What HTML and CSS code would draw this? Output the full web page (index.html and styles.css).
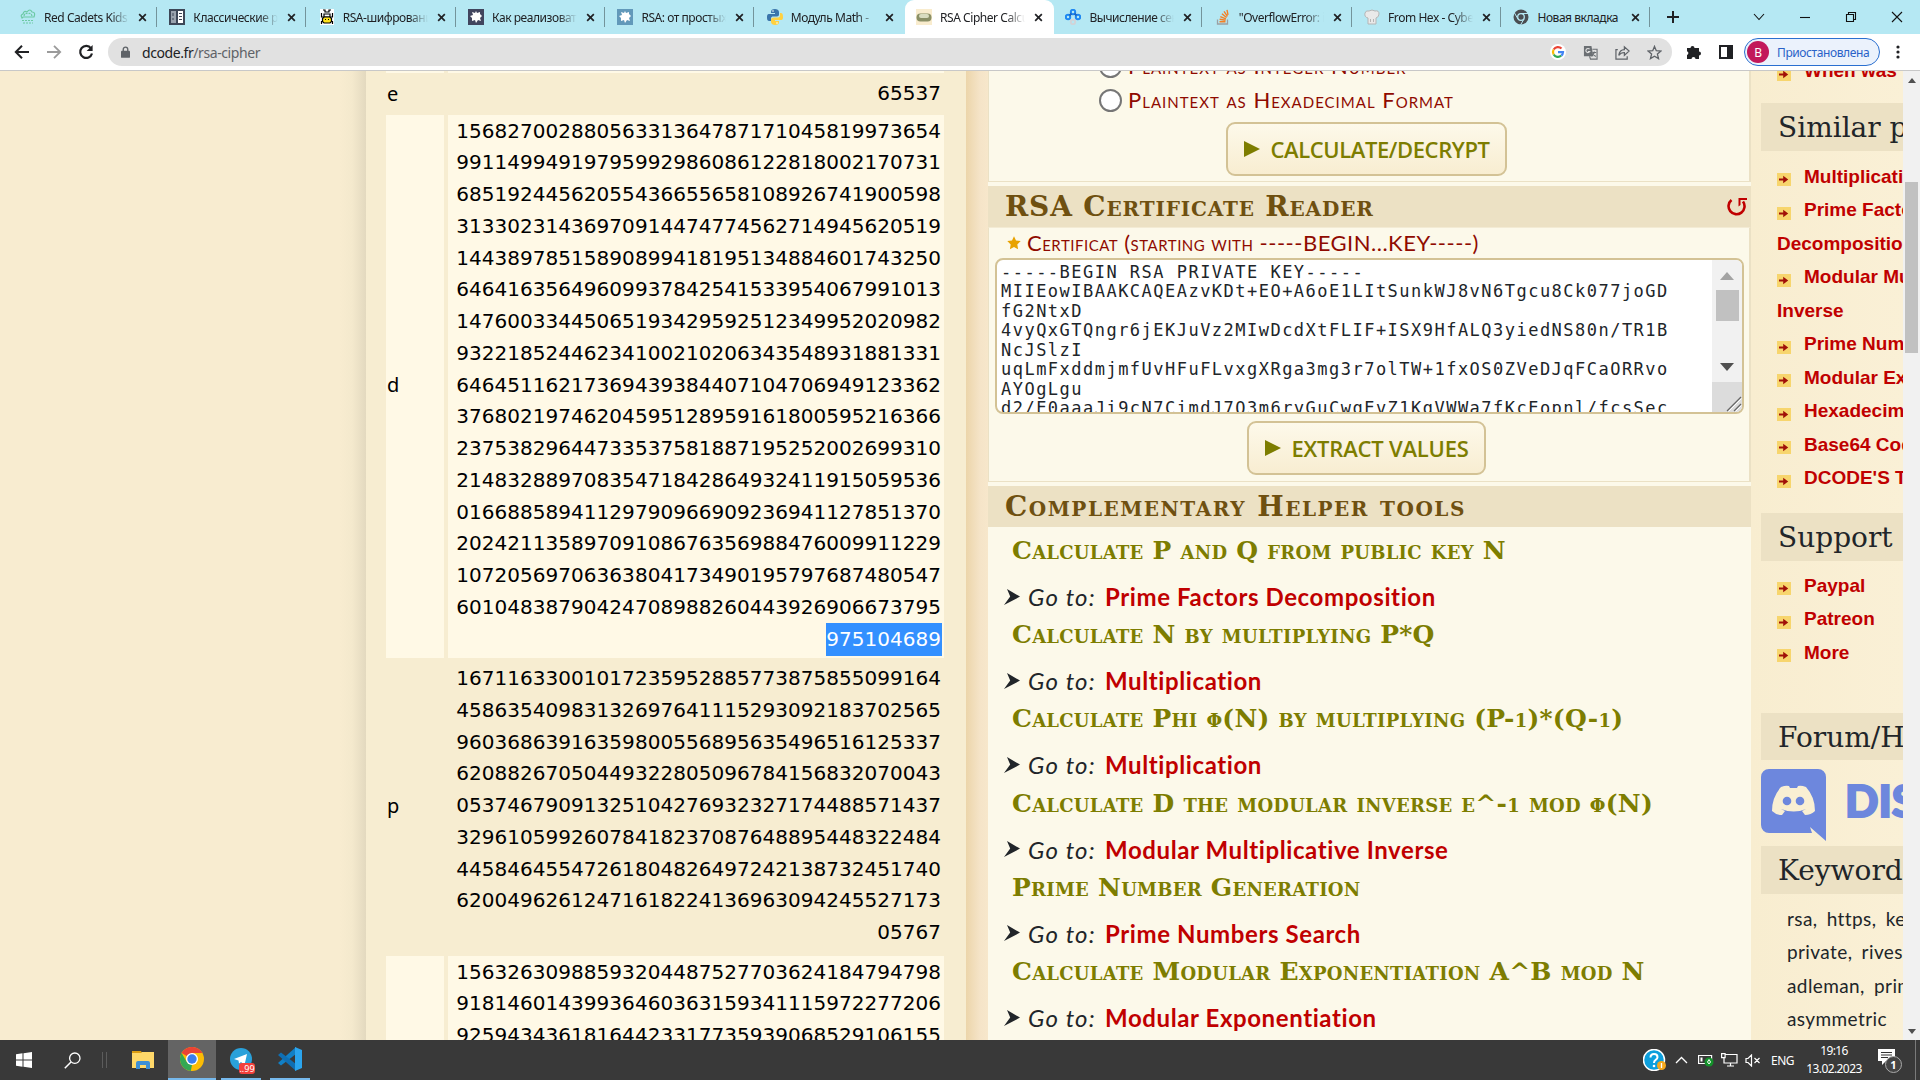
FILE: index.html
```html
<!DOCTYPE html>
<html lang="ru">
<head>
<meta charset="utf-8">
<title>RSA Cipher Calculator</title>
<link rel="stylesheet" href="styles.css">
</head>
<body>
<svg width="0" height="0" class="defs">
  <symbol id="x" viewBox="0 0 10 10"><path d="M1.3 1.3l7.4 7.4M8.7 1.3L1.3 8.7" stroke="#202124" stroke-width="1.9" fill="none"/></symbol>
  <symbol id="bullet" viewBox="0 0 14 13"><rect width="14" height="13" fill="#f7d56d"/><path d="M2 5.6h4.2V2.7l5 3.8-5 3.8V7.6H2z" fill="#a01008"/></symbol>
  <symbol id="go" viewBox="0 0 16 16"><path d="M3 0l13 7.6L0 16l6.2-8.4z" fill="#212529"/></symbol>
</svg>

<header class="tabs">
  <div class="tab"><svg class="fav" viewBox="0 0 16 16"><g fill="none" stroke="#6cc9a4" stroke-width="1.2"><path d="M2 9Q0 6 3 5 4 1 7 3 10-1 12 3q4 0 2 5H3z"/><path d="M4 7q1-4 4-2 3-2 4 2M2 11.5h12M3 14h10" stroke-dasharray="2 1"/></g></svg><span>Red Cadets Kids C</span><svg class="x"><use href="#x"/></svg></div>
  <div class="tab"><svg class="fav" viewBox="0 0 16 16"><path fill="#3d4757" d="M0 0h16v16H0z"/><path fill="#9aa3ae" d="M2 2h5v12H2z"/><path fill="#fff" d="M9 2h5v12H9z"/><path stroke="#3d4757" d="M4 4v3M4 9v2M10 4.5h3M10 7.500h3M10 10.5h3"/></svg><span>Классические ре</span><svg class="x"><use href="#x"/></svg></div>
  <div class="tab"><svg class="fav" viewBox="0 0 16 16"><path fill="#fff" d="M1 0h14v16H1z"/><path fill="none" stroke="#000" stroke-width="1.2" d="M4 1h2v2h4V1h2M2.500 4v4h2M13.500 4v4h-2M2.500 15v-3M13.500 15v-3"/><path fill="none" stroke="#000" stroke-width="1.2" d="M5 5h6v3H5z"/><path fill="#ffe21a" stroke="#000" stroke-width="1.2" d="M5 8h6l1.500 1.500v3L11 14H5l-1.500-1.500v-3z"/><path fill="#000" d="M6 10h1v1H6zM9 10h1v1H9z"/></svg><span>RSA-шифрование</span><svg class="x"><use href="#x"/></svg></div>
  <div class="tab"><svg class="fav" viewBox="0 0 16 16"><path fill="#41455e" d="M0 0h16v16H0z"/><path fill="#fff" d="M8 2l1 2 3-1 0 2 2 2-2 2 1 3-3-1-2 3-1-3-3 1 0-3-2-2 3-1-1-3 3 1z"/></svg><span>Как реализовать</span><svg class="x"><use href="#x"/></svg></div>
  <div class="tab"><svg class="fav" viewBox="0 0 16 16"><path fill="#6299ba" d="M0 0h16v16H0z"/><path fill="#fff" d="M8 2l1 2 3-1 0 2 2 2-2 2 1 3-3-1-2 3-1-3-3 1 0-3-2-2 3-1-1-3 3 1z"/></svg><span>RSA: от простых ч</span><svg class="x"><use href="#x"/></svg></div>
  <div class="tab last"><svg class="fav" viewBox="0 0 16 16"><path fill="#3a75ab" d="M8 0C5 0 4 1 4 3v1h4v1H2C0 5 0 7 0 8s0 4 2 4h2V9.500C4 8 5 7.500 6 7.500h4c1 0 2-1 2-2V3c0-2-2-3-4-3z"/><path fill="#ffd140" d="M8 16c3 0 4-1 4-3v-1H8v-1h6c2 0 2-2 2-3s0-4-2-4h-1v2.500C13 8 12 8.500 10.500 8.500H7c-2 0-3 1-3 2V13c0 2 2 3 4 3z"/><circle cx="6" cy="2" r=".8" fill="#fff"/><circle cx="10" cy="14" r=".8" fill="#fff"/></svg><span>Модуль Math - </span><svg class="x"><use href="#x"/></svg></div>
  <div class="tab active"><svg class="fav" viewBox="0 0 16 16"><path fill="#f9ecce" d="M0 0h16v16H0z"/><rect x=".5" y="4.500" width="15" height="8" rx="4" fill="#8a8f66"/><rect x="3" y="5" width="10" height="4" rx="2" fill="#d9dcc0"/></svg><span>RSA Cipher Calcu</span><svg class="x"><use href="#x"/></svg></div>
  <div class="tab"><svg class="fav" viewBox="0 0 16 16"><g fill="none" stroke-width="2"><g stroke="#1e88f2"><circle cx="3" cy="8" r="2.200"/><circle cx="8" cy="3" r="2.200"/><circle cx="13" cy="8" r="2.200"/></g><circle cx="8" cy="13" r="2.200" stroke="#d0d4d8"/><path d="M4.500 6.500l2-2M9.500 4.500l2 2" stroke="#1e66c2"/></g></svg><span>Вычисление сек</span><svg class="x"><use href="#x"/></svg></div>
  <div class="tab"><svg class="fav" viewBox="0 0 16 16"><path fill="none" stroke="#9aa0a4" stroke-width="1.300" d="M2.500 10.500V15h10v-4.500"/><path stroke="#f48024" stroke-width="1.400" d="M4.500 12.700h6M4.600 10.200l6 1M5.300 7.600l5.600 2.300M6.900 4.800l4.700 3.700M9 2.300l3.500 5M12 .8l1 5"/></svg><span>"OverflowError: in</span><svg class="x"><use href="#x"/></svg></div>
  <div class="tab"><svg class="fav" viewBox="0 0 16 16"><path fill="#e9e9e9" stroke="#b5b5b5" d="M4 15V9Q0 8 1 4q1-3 4-2 3-2 6 0 4-1 4 3 0 3-3 4v6z"/><path stroke="#b5b5b5" d="M6.500 10v3M9.500 10v3"/></svg><span>From Hex - Cyber</span><svg class="x"><use href="#x"/></svg></div>
  <div class="tab"><svg class="fav" viewBox="0 0 16 16"><circle cx="8" cy="8" r="7.500" fill="#4a4d51"/><circle cx="8" cy="8" r="3.300" fill="#4a4d51" stroke="#b5e8f3" stroke-width="1.300"/><path d="M8 4.500h7M5 10L1.500 4M11 10l-3.500 6" stroke="#b5e8f3" stroke-width="1"/></svg><span class="full">Новая вкладка</span><svg class="x"><use href="#x"/></svg></div>
  <svg class="plus" viewBox="0 0 14 14"><path d="M7 1v12M1 7h12" stroke="#202124" stroke-width="2"/></svg>
  <div class="winctl">
    <svg viewBox="0 0 12 12"><path d="M1 3l5 5.500L11 3" /></svg>
    <svg viewBox="0 0 12 12"><path d="M1 6.500h10"/></svg>
    <svg viewBox="0 0 12 12"><path d="M1.500 3.500h7v7h-7zM3.500 3.500v-2h7v7h-2"/></svg>
    <svg viewBox="0 0 12 12"><path d="M1 1l10 10M11 1L1 11"/></svg>
  </div>
</header>

<nav class="toolbar">
  <svg class="nav" viewBox="0 0 16 16"><path d="M15 8H2M8 1.800L1.800 8 8 14.200" stroke="#202124" stroke-width="2" fill="none"/></svg>
  <svg class="nav" viewBox="0 0 16 16"><path d="M1 8h13M8 1.800L14.200 8 8 14.200" stroke="#9b9b9b" stroke-width="1.800" fill="none"/></svg>
  <svg class="nav" viewBox="0 0 16 16"><path d="M13 4.300A6 6 0 1 0 14 9.500" stroke="#202124" stroke-width="2.200" fill="none"/><path d="M14.600 1v6H8.600z" fill="#202124"/></svg>
  <div class="omni">
    <svg class="lock" viewBox="0 0 10 13"><path fill="#5f6368" d="M1 5h8a1 1 0 0 1 1 1v6a1 1 0 0 1-1 1H1a1 1 0 0 1-1-1V6a1 1 0 0 1 1-1z"/><path fill="none" stroke="#5f6368" stroke-width="1.500" d="M2.500 6V3.500a2.500 2.500 0 0 1 5 0V6"/></svg>
    <span class="url">dcode.fr<i>/rsa-cipher</i></span>
    <span class="goog"><svg viewBox="0 0 16 16" width="16" height="16"><circle cx="8" cy="8" r="8" fill="#fff"/><g fill="none" stroke-width="2.200"><path stroke="#ea4335" d="M3.700 5.500A5 5 0 0 1 11.500 4.500"/><path stroke="#fbbc05" d="M3.600 5.600a5 5 0 0 0 0 4.800"/><path stroke="#34a853" d="M3.700 10.500a5 5 0 0 0 7.500 1.200"/><path stroke="#4285f4" d="M8 8.200h5a5 5 0 0 1-1.700 3.500"/></g></svg></span>
    <svg class="oi" viewBox="0 0 16 16"><path fill="#6b6f73" d="M1 1h8l2 11H1z"/><path fill="none" stroke="#6b6f73" stroke-width="1.200" d="M10 4.500h5V15H8l-1-3M10 8h4M12 7v1q-.5 3-3 4M10.500 9l3 3.500"/><path fill="none" stroke="#e1e1e1" stroke-width="1.200" d="M7 4.500A2.200 2.200 0 1 0 7.200 7H5.200"/></svg>
    <svg class="oi" viewBox="0 0 16 16"><path fill="none" stroke="#5f6368" stroke-width="1.300" d="M3 5H1v10h12v-3M4 11q1-6 6-6V2l5 4.500-5 4.500V8Q6 8 4 11z"/></svg>
    <svg class="oi" viewBox="0 0 16 16"><path fill="none" stroke="#5f6368" stroke-width="1.400" d="M8 1.500l1.900 4.600 5 .4-3.800 3.200 1.200 4.800L8 11.900l-4.300 2.600 1.200-4.800L1.100 6.500l5-.4z"/></svg>
  </div>
  <svg class="ext" viewBox="0 0 16 16"><path fill="#202124" d="M1 4h3.500a2 2 0 1 1 4 0H13v3.500a2 2 0 1 1 0 4V15H9.500a2 2 0 0 0-4 0H1v-4a2 2 0 0 0 0-3.800z"/></svg>
  <svg class="side-ic" viewBox="0 0 14 14"><path fill="none" stroke="#202124" stroke-width="2" d="M1 1h12v12H1z"/><path fill="#202124" d="M8 1h5v12H8z"/></svg>
  <div class="profile"><b>В</b><span>Приостановлена</span></div>
  <svg class="dots" viewBox="0 0 4 16"><circle cx="2" cy="3" r="1.600"/><circle cx="2" cy="8" r="1.600"/><circle cx="2" cy="13" r="1.600"/></svg>
</nav>

<main class="page">
  <div class="margin-left"></div>
  <section class="results">
    <div class="row light stub"><div></div><div></div></div>
    <div class="row e"><div>e</div><div>65537</div></div>
    <div class="row light"><div>d</div><div>15682700288056331364787171045819973654<br>99114994919795992986086122818002170731<br>68519244562055436655658108926741900598<br>31330231436970914474774562714945620519<br>14438978515890899418195134884601743250<br>64641635649609937842541533954067991013<br>14760033445065193429592512349952020982<br>93221852446234100210206343548931881331<br>64645116217369439384407104706949123362<br>37680219746204595128959161800595216366<br>23753829644733537581887195252002699310<br>21483288970835471842864932411915059536<br>01668858941129790966909236941127851370<br>20242113589709108676356988476009911229<br>10720569706363804173490195797687480547<br>60104838790424708988260443926906673795<br><mark>975104689</mark></div></div>
    <div class="row"><div>p</div><div>16711633001017235952885773875855099164<br>45863540983132697641115293092183702565<br>96036863916359800556895635496516125337<br>62088267050449322805096784156832070043<br>05374679091325104276932327174488571437<br>32961059926078418237087648895448322484<br>44584645547261804826497242138732451740<br>62004962612471618224136963094245527173<br>05767</div></div>
    <div class="row light"><div></div><div>15632630988593204487527703624184794798<br>91814601439936460363159341115972277206<br>92594343618164423317735939068529106155<br>&nbsp;</div></div>
  </section>
  <div class="gutter"></div>
  <section class="tools">
    <div class="box first">
      <label class="opt cut"><i></i><span>Plaintext as Integer Number</span></label>
      <label class="opt"><i></i><span>Plaintext as Hexadecimal Format</span></label>
      <button class="btn b1"><svg viewBox="0 0 16 16"><path d="M0 0l16 8-16 8z"/></svg><span>CALCULATE/DECRYPT</span></button>
    </div>
    <h2><span class="t1">RSA Certificate Reader</span><svg class="reset" viewBox="0 0 21 19"><path d="M4.500 3A8 8 0 1 0 16 4.500" fill="none" stroke="#c00000" stroke-width="2.600"/><path d="M20 1H11.500v8.500l2-1.500V3H20z" fill="#c00000"/></svg></h2>
    <div class="box second">
      <div class="cert"><svg viewBox="0 0 14 14"><path fill="#e8a200" d="M7 .3l2 4.200 4.700.6-3.400 3.300.8 4.900L7 11l-4.100 2.300.8-4.900L.3 5.100 5 4.500z"/></svg><span>Certificat (starting with -----BEGIN...KEY-----)</span></div>
      <div class="area">
        <pre>-----BEGIN RSA PRIVATE KEY-----
MIIEowIBAAKCAQEAzvKDt+EO+A6oE1LItSunkWJ8vN6Tgcu8Ck077joGD
fG2NtxD
4vyQxGTQngr6jEKJuVz2MIwDcdXtFLIF+ISX9HfALQ3yiedNS80n/TR1B
NcJSlzI
uqLmFxddmjmfUvHFuFLvxgXRga3mg3r7olTW+1fxOS0ZVeDJqFCaORRvo
AYOgLgu
d2/E0aaaJi9cN7CimdJ7O3m6ryGuCwqEvZ1KgVWWa7fKcEopnl/fcsSec</pre>
        <div class="abar"><svg class="up" viewBox="0 0 14 8"><path fill="#a3a3a3" d="M7 0l7 8H0z"/></svg><div class="athumb"></div><svg class="down" viewBox="0 0 14 8"><path fill="#505050" d="M7 8l7-8H0z"/></svg><div class="grip"><svg viewBox="0 0 16 16"><path d="M1 15L15 1M8 15l7-7" stroke="#666" stroke-width="1.200"/><path d="M2.500 15.500L15.500 2.500M9.500 15.500l6-6" stroke="#fff" stroke-width="1"/></svg></div></div>
      </div>
      <button class="btn b2"><svg viewBox="0 0 16 16"><path d="M0 0l16 8-16 8z"/></svg><span>EXTRACT VALUES</span></button>
    </div>
    <h2><span class="t2">Complementary Helper tools</span></h2>
    <div class="helpers">
      <h3>Calculate P and Q from public key N</h3>
      <p><svg><use href="#go"/></svg><em>Go to:</em><a>Prime Factors Decomposition</a></p>
      <h3>Calculate N by multiplying P*Q</h3>
      <p><svg><use href="#go"/></svg><em>Go to:</em><a>Multiplication</a></p>
      <h3>Calculate Phi φ(N) by multiplying (P-<small>1</small>)*(Q-<small>1</small>)</h3>
      <p><svg><use href="#go"/></svg><em>Go to:</em><a>Multiplication</a></p>
      <h3>Calculate D the modular inverse e^-<small>1</small> mod φ(N)</h3>
      <p><svg><use href="#go"/></svg><em>Go to:</em><a>Modular Multiplicative Inverse</a></p>
      <h3>Prime Number Generation</h3>
      <p><svg><use href="#go"/></svg><em>Go to:</em><a>Prime Numbers Search</a></p>
      <h3>Calculate Modular Exponentiation A^B mod N</h3>
      <p><svg><use href="#go"/></svg><em>Go to:</em><a>Modular Exponentiation</a></p>
    </div>
  </section>
  <aside class="sidebar">
    <ul class="when"><li><svg><use href="#bullet"/></svg><a>When was</a></li></ul>
    <h4 class="sim">Similar pages</h4>
    <ul class="pages">
      <li><svg><use href="#bullet"/></svg><a>Multiplication</a></li>
      <li><svg><use href="#bullet"/></svg><a>Prime Factors</a></li>
      <li><a>Decomposition</a></li>
      <li><svg><use href="#bullet"/></svg><a>Modular Multiplicative</a></li>
      <li><a>Inverse</a></li>
      <li><svg><use href="#bullet"/></svg><a>Prime Numbers</a></li>
      <li><svg><use href="#bullet"/></svg><a>Modular Exponentiation</a></li>
      <li><svg><use href="#bullet"/></svg><a>Hexadecimal</a></li>
      <li><svg><use href="#bullet"/></svg><a>Base64 Coding</a></li>
      <li><svg><use href="#bullet"/></svg><a>DCODE'S TOOLS</a></li>
    </ul>
    <h4>Support</h4>
    <ul class="support">
      <li><svg><use href="#bullet"/></svg><a>Paypal</a></li>
      <li><svg><use href="#bullet"/></svg><a>Patreon</a></li>
      <li><svg><use href="#bullet"/></svg><a>More</a></li>
    </ul>
    <h4>Forum/Help</h4>
    <div class="discord">
      <svg viewBox="0 0 65 72" width="65" height="72"><path fill="#6d87dd" d="M8 0h49a8 8 0 0 1 8 8v64L49 58l2 6H8a8 8 0 0 1-8-8V8a8 8 0 0 1 8-8z"/><path fill="#f9efd3" d="M20 18q5-2 8-1l1 2h7l1-2q3-1 8 1 9 10 9 24-4 4-10 4l-3-4 4-2q-12 5-25 0l4 2-3 4q-6 0-10-4 0-14 9-24z"/><circle cx="26" cy="32" r="4.300" fill="#6d87dd"/><circle cx="39" cy="32" r="4.300" fill="#6d87dd"/></svg>
      <b>DISCORD</b>
    </div>
    <h4>Keywords</h4>
    <p class="keys">rsa, https, key,<br>private, rivest,<br>adleman, prime,<br>asymmetric</p>
  </aside>
  <div class="scroll"><svg viewBox="0 0 8 5"><path d="M4 0l4 5H0z" fill="#505050"/></svg><div class="thumb"></div><svg viewBox="0 0 8 5"><path d="M4 5l4-5H0z" fill="#505050"/></svg></div>
</main>

<footer class="taskbar">
  <div class="ti start"><svg viewBox="0 0 16 16" width="16" height="16"><path fill="#fff" d="M0 2.200l6.500-.9v6.200H0zM7.500 1.200L16 0v7.500H7.500zM0 8.500h6.500v6.200L0 13.800zM7.500 8.500H16V16l-8.500-1.200z"/></svg></div>
  <div class="ti search"><svg viewBox="0 0 17 17" width="17" height="17"><circle cx="10.800" cy="6.200" r="5.200" fill="none" stroke="#fff" stroke-width="1.300"/><path d="M7 10L.8 16.200" stroke="#fff" stroke-width="1.500"/></svg></div>
  <div class="sep"></div>
  <div class="ti expl"><svg viewBox="0 0 22 18" width="22" height="18"><path fill="#dc9d12" d="M0 0h9l1 2H0z"/><path fill="#ffd869" d="M0 2h9l1-1h12v16H0z"/><path fill="#3c8fd6" d="M4 18v-6q0-2 2-2h10q2 0 2 2v6h-4v-4H8v4z"/></svg></div>
  <div class="ti chrome on"><svg viewBox="0 0 24 24" width="24" height="24"><circle cx="12" cy="12" r="12" fill="#fbbc05"/><path fill="#ea4335" d="M12 12L1.600 6A12 12 0 0 1 22.400 6H12z"/><path fill="#34a853" d="M1.600 6l5.200 9L12 18l-1.200 6A12 12 0 0 1 1.600 6z"/><circle cx="12" cy="12" r="6" fill="#fff"/><circle cx="12" cy="12" r="4.700" fill="#3b7ded"/></svg></div>
  <div class="ti tg run"><svg viewBox="0 0 22 22" width="22" height="22"><circle cx="11" cy="11" r="11" fill="#2aa1da"/><path fill="#fff" d="M4 11l13-5-2.500 11-3.500-3-2 1.500-.5-3z"/></svg><span>..99</span></div>
  <div class="ti vs run"><svg viewBox="0 0 24 24" width="24" height="24"><path fill="#1180c6" d="M18 0v7L3 18.500 0 16 18 0z"/><path fill="#0f6fb4" d="M18 24v-7L3 5.500 0 8z"/><path fill="#2ba5ee" d="M17 0l7 3v18l-7 3z"/></svg></div>
  <div class="tray">
    <svg class="help" viewBox="0 0 23 22" width="23" height="22"><circle cx="11" cy="11" r="10.500" fill="#0d9fdc" stroke="#fff" stroke-width="1.500"/><path d="M7.500 8.500Q7.500 5 11 5t3.500 3.200Q14.500 10 12.500 11 11 12 11 14" fill="none" stroke="#fff" stroke-width="2"/><circle cx="11" cy="17" r="1.300" fill="#fff"/><circle cx="18.500" cy="16.500" r="4.500" fill="#f5a81c"/><path d="M18.500 14v5" stroke="#fff" stroke-width="1.300"/></svg>
    <svg class="chev" viewBox="0 0 13 8" width="13" height="8"><path d="M1 7l5.500-5.500L12 7" fill="none" stroke="#fff" stroke-width="1.300"/></svg>
    <svg class="bat" viewBox="0 0 16 14" width="16" height="14"><path d="M.6 2.500h13v8H.6z" fill="none" stroke="#fff" stroke-width="1.200"/><path d="M2.500 4.500h2v4h-2z" fill="#fff"/><circle cx="11" cy="9" r="4.500" fill="#13922a"/><path d="M11 6.500l1.500 2.500-1.500 2-1.500-2z" fill="none" stroke="#fff"/></svg>
    <svg class="net" viewBox="0 0 17 14" width="17" height="14"><path d="M4 1.500h12v8.500H3V5M9.500 10v3M6 13h7M.6.600h3.500v4H.6z" fill="none" stroke="#fff" stroke-width="1.200"/></svg>
    <svg class="snd" viewBox="0 0 16 13" width="16" height="13"><path d="M1 4.500h2L6.500 1v11L3 8.500H1zM9.500 4l5 5M14.500 4l-5 5" fill="none" stroke="#fff" stroke-width="1.200"/></svg>
    <span class="lang">ENG</span>
    <div class="clock"><span>19:16</span><span>13.02.2023</span></div>
    <div class="notif"><svg viewBox="0 0 17 16" width="17" height="16"><path fill="#fff" d="M0 0h17v12H8l-4 4v-4H0z"/><path d="M3 3.500h11M3 6h11M3 8.500h7" stroke="#333" stroke-width="1"/></svg><b>1</b></div>
    <div class="desk"></div>
  </div>
</footer>
</body>
</html>
```
FILE: styles.css
```css
* { box-sizing: border-box; }
body { margin: 0; width: 1920px; height: 1080px; overflow: hidden; display: flex; flex-direction: column; font-family: "Noto Sans", sans-serif; color: #212529; }
h2, h3, h4, p, ul, pre { margin: 0; padding: 0; }
ul { list-style: none; }
svg { display: block; flex: none; }
.defs { position: absolute; }

/* tab strip */
.tabs { flex: none; height: 34px; background: #b5e8f3; display: flex; align-items: center; padding-left: 9px; }
.tab { width: 149.350px; height: 34px; display: flex; align-items: center; padding-left: 11px; flex: none; }
.tab::after { content: ""; width: 1px; height: 20px; background: #73949b; margin-left: 9px; }
.tab.last::after, .tab.active::after { background: none; }
.tab.active { background: #fff; border-radius: 9px 9px 0 0; }
.fav { width: 16px; height: 16px; margin-right: 8px; }
.tab span { width: 85px; white-space: nowrap; overflow: hidden; font-size: 12px; letter-spacing: -.45px; color: #202124; -webkit-mask-image: linear-gradient(90deg, #000 78%, transparent); mask-image: linear-gradient(90deg, #000 78%, transparent); }
.tab span.full { -webkit-mask-image: none; mask-image: none; }
.tab .x { width: 9px; height: 9px; margin-left: 9px; }
.plus { width: 14px; height: 14px; margin-left: 14px; }
.winctl { display: flex; margin-left: auto; padding-right: 17px; gap: 34px; }
.winctl svg { width: 12px; height: 12px; fill: none; stroke: #111; stroke-width: 1.100; }

/* toolbar */
.toolbar { flex: none; height: 37px; border-bottom: 1px solid #c8c8c8; background: #fff; display: flex; align-items: center; padding-left: 14px; }
.nav { width: 16px; height: 16px; margin-right: 16px; }
.omni { width: 1564px; height: 28px; border-radius: 14px; background: #e1e1e1; display: flex; align-items: center; margin-left: -2px; padding: 0 10px 0 13px; }
.lock { width: 9px; height: 12px; margin-right: 12px; }
.url { font-size: 14px; letter-spacing: -.42px; color: #202124; margin-right: auto; }
.url i { font-style: normal; color: #5f6368; }
.oi { width: 15px; height: 15px; margin-left: 17px; }
.ext { width: 16px; height: 16px; margin-left: 14px; }
.side-ic { width: 14px; height: 14px; margin-left: 17px; }
.profile { width: 136px; height: 28px; border: 1.500px solid #2a6fd0; border-radius: 14px; background: #ebf2fc; margin-left: 11px; display: flex; align-items: center; padding-left: 2px; color: #2a62c8; font-size: 12px; letter-spacing: -.4px; }
.profile b { width: 22px; height: 22px; border-radius: 50%; background: #c2185b; color: #fff; font-weight: 400; display: flex; align-items: center; justify-content: center; margin-right: 8px; }
.dots { width: 4px; height: 16px; margin-left: 16px; fill: #202124; }

/* page */
.page { flex: none; height: 969px; display: flex; overflow: hidden; background: #f8eed2; }
.margin-left { width: 366px; background: linear-gradient(90deg, #f8ecd0 340px, #f4e9cd 352px, #e3d9bf 366px); }
.results { width: 600px; padding: 0 20px; background: #f7edd1; font: 20px/31.750px "DejaVu Sans", sans-serif; color: #000; }
.row { display: grid; grid-template-columns: 58px 496px; column-gap: 4px; margin-bottom: 3.800px; }
.row > div { padding: 1px 3px 3px 1px; }
.row > div:first-child { display: flex; align-items: center; font-family: "Noto Sans", sans-serif; padding-bottom: 4px; }
.row > div:last-child { text-align: right; white-space: nowrap; letter-spacing: .03px; }
.row.light > div { background: #fff9e6; }
.row.stub { height: 2px; }
.row.stub > div { padding: 0; }
.row.e { height: 34px; }
mark { background: #3390ff; color: #fff; padding: 4px 1px 5px 0; margin-right: -1px; }
.gutter { width: 22px; background: linear-gradient(90deg, #ecd5aa, #f5e4c8 14px, #f7e7cb); }

.tools { width: 763px; background: #fcf9ea; }
.box { width: 763px; border: 1px solid #ebe1c5; border-right-width: 2px; border-top: 0; display: flex; flex-direction: column; }
.box.first { height: 111px; margin-bottom: 4px; }
.opt { margin-left: 110px; height: 34px; display: flex; align-items: center; flex: none; font: 22px/34px Lato, sans-serif; font-variant: small-caps; letter-spacing: 1px; color: #8f0a00; white-space: nowrap; }
.opt.cut { margin-top: -22px; }
.opt i { width: 23px; height: 23px; border: 2px solid #767676; border-radius: 50%; background: #fff; margin-right: 6px; }
.btn { border: 2px solid #d3c295; border-radius: 9px; background: linear-gradient(#fdf9ea, #f8edd1); display: flex; align-items: center; align-self: center; padding: 0 0 0 16px; font: 600 22px/30px "Open Sans", sans-serif; color: #7d7d00; white-space: nowrap; }
.btn svg { width: 16px; height: 16px; fill: #7d7d00; margin-right: 11px; }
.b1 { width: 281px; height: 54px; margin: 5px 6px 0 0; letter-spacing: -.4px; }
.b2 { width: 239px; height: 54px; margin: 7px 6px 0 0; letter-spacing: -.2px; }
h2 { height: 41px; background: #ece1c4; display: flex; align-items: center; padding: 0 3px 0 17px; font: bold 28px/41px "DejaVu Serif", serif; font-variant: small-caps; color: #6f5010; white-space: nowrap; }
.t1 { letter-spacing: .85px; }
.t2 { letter-spacing: 1.500px; }
.reset { width: 21px; height: 19px; margin-left: auto; }
.box.second { height: 255px; margin-bottom: 4px; border-top: 1px solid #f3ebd4; }
.cert { height: 30px; display: flex; align-items: center; padding: 0 0 1px 18px; font: 22px/29px Lato, sans-serif; font-variant: small-caps; letter-spacing: .5px; color: #8f0a00; white-space: nowrap; }
.cert svg { width: 14px; height: 14px; margin-right: 6px; }
.area { width: 749px; height: 156px; margin-left: 6px; border: 2px solid #d3c295; border-radius: 8px; background: #fff; overflow: hidden; display: flex; flex: none; }
pre { width: 715px; padding: 3px 0 0 4px; font: 17px/19.430px "DejaVu Sans Mono", monospace; letter-spacing: 1.480px; color: #212529; }
.abar { width: 30px; background: #f1f1f1; display: flex; flex-direction: column; align-items: center; }
.abar .up { width: 14px; height: 8px; margin-top: 12px; }
.athumb { width: 23px; height: 31px; background: #c1c1c1; margin-top: 10px; }
.abar .down { width: 14px; height: 8px; margin-top: 42px; }
.grip { width: 30px; height: 30px; background: #dcdcdc; margin-top: auto; display: flex; align-items: flex-end; justify-content: flex-end; }
.grip svg { width: 16px; height: 16px; }
.helpers { padding-top: 4px; }
.helpers h3 { height: 40px; padding-left: 24px; font: bold 25px/40px "DejaVu Serif", serif; font-variant: small-caps; letter-spacing: .25px; color: #7d7d00; white-space: nowrap; }
.helpers small { font-size: 18px; }
.helpers p { height: 44.200px; padding: 7px 0 0 16px; display: flex; align-items: center; font: 24px/37px Lato, sans-serif; }
.helpers p svg { width: 16px; height: 16px; margin-right: 8px; }
.helpers em { width: 77px; letter-spacing: 1.200px; }
.helpers a { font-weight: 700; letter-spacing: .6px; color: #c00000; white-space: nowrap; }

/* sidebar */
.sidebar { width: 152px; padding-left: 10px; overflow: hidden; background: linear-gradient(90deg, #f8edd0, #faf0d6); }
.sidebar h4 { height: 47.500px; background: #ece1c4; padding-left: 17px; font: 400 28px/49px "DejaVu Serif", serif; white-space: nowrap; }
.sidebar ul { padding-left: 16px; display: flow-root; }
.sidebar li { height: 33.500px; display: flex; align-items: center; font: bold 19px/33px "Liberation Sans", sans-serif; color: #c00000; white-space: nowrap; }
.sidebar li svg { width: 14px; height: 13px; margin: 7px 13px 0 0; }
.when { height: 32px; }
.when li { margin-top: -17px; }
.pages { height: 362.500px; padding-top: 9px; }
.support { height: 152px; padding-top: 8px; }
.discord { height: 86px; padding-top: 9px; display: flex; }
.discord b { margin-left: 19px; font: 900 44px/62px Lato, sans-serif; color: #6d87dd; -webkit-text-stroke: 2px #6d87dd; }
.keys { padding: 8px 0 0 26px; font: 19px/33.500px Lato, sans-serif; letter-spacing: .4px; word-spacing: 4px; white-space: nowrap; }
.scroll { width: 17px; background: #f1f1f1; display: flex; flex-direction: column; align-items: center; padding: 7px 0 6px; }
.scroll svg { width: 8px; height: 5px; }
.thumb { width: 13px; height: 171px; margin: 99px 0 auto; background: #c1c1c1; }

/* taskbar */
.taskbar { flex: none; height: 40px; background: #393939; display: flex; color: #fff; }
.ti { height: 40px; display: flex; align-items: center; justify-content: center; position: relative; }
.start, .search { width: 48px; }
.sep { width: 5px; height: 16px; margin: 12px 23px 0 6px; border: solid #5c5c5c; border-width: 0 1px; }
.expl { width: 26px; margin-right: 12px; }
.on { width: 48px; background: #646464; border-bottom: 2px solid #76b9ed; }
.run { width: 40px; border-bottom: 2px solid #76b9ed; }
.tg { margin-left: 5px; }
.vs { margin-left: 9px; }
.tg span { position: absolute; left: 18px; top: 23px; width: 16px; height: 11px; border-radius: 3px; background: #f2403c; font: 9px/11px "Noto Sans", sans-serif; text-align: center; }
.tray { margin-left: auto; display: flex; align-items: center; }
.chev { margin-left: 9px; }
.bat { margin-left: 10px; }
.net { margin-left: 7px; }
.snd { margin-left: 7px; }
.lang { width: 24px; margin-left: 10px; font-size: 12px; letter-spacing: -.5px; }
.clock { width: 62px; margin-left: 8px; display: flex; flex-direction: column; align-items: center; font-size: 12px; line-height: 18px; letter-spacing: -.6px; }
.notif { width: 26px; margin-left: 13px; height: 22px; position: relative; }
.notif b { position: absolute; left: 7px; top: 7px; width: 17px; height: 17px; border: 1px solid #aaa; border-radius: 50%; background: #444; font-size: 11px; line-height: 15px; text-align: center; }
.desk { width: 5px; height: 40px; margin-left: 11px; border-left: 1px solid #7a7a7a; }
```
